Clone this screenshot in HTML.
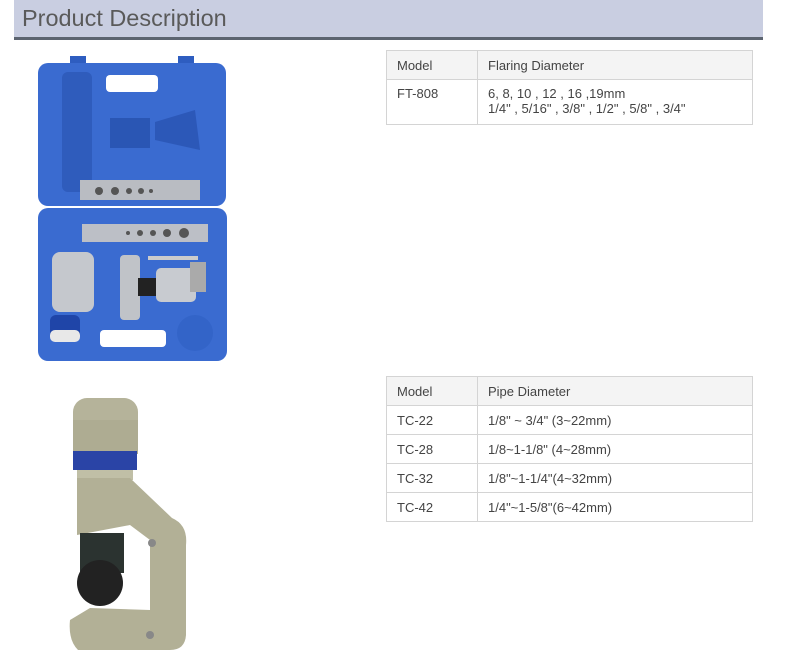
<!DOCTYPE html>
<html><head><meta charset="utf-8"><style>
body{margin:0;background:#fff;width:789px;height:671px;overflow:hidden;font-family:"Liberation Sans",sans-serif;position:relative}
.hd{position:absolute;left:14px;top:0;width:749px;height:37px;background:#c9cee1;border-bottom:3px solid #5c6470}
.hd span{position:absolute;left:8px;top:5px;font-size:23px;color:#5a5a5a;transform:scaleX(1.02);transform-origin:left;letter-spacing:0}
table{position:absolute;left:386px;border-collapse:collapse;width:367px;font-size:13px;color:#444}
td{border:1px solid #d4d4d4;padding:0 10px;vertical-align:top}
td:first-child{width:70px}
tr.h td{background:#f4f4f4}
</style></head><body>
<div class="hd"><span>Product Description</span></div>

<table style="top:50px">
<tr class="h" style="height:29px"><td style="vertical-align:middle">Model</td><td style="vertical-align:middle">Flaring Diameter</td></tr>
<tr style="height:45px"><td style="padding-top:6px">FT-808</td><td style="padding-top:6px;line-height:15px">6, 8, 10 , 12 , 16 ,19mm<br>1/4" , 5/16" , 3/8" , 1/2" , 5/8" , 3/4"</td></tr>
</table>

<table style="top:376px">
<tr class="h" style="height:29px"><td style="vertical-align:middle">Model</td><td style="vertical-align:middle">Pipe Diameter</td></tr>
<tr style="height:29px"><td style="vertical-align:middle">TC-22</td><td style="vertical-align:middle">1/8" ~ 3/4" (3~22mm)</td></tr>
<tr style="height:29px"><td style="vertical-align:middle">TC-28</td><td style="vertical-align:middle">1/8~1-1/8" (4~28mm)</td></tr>
<tr style="height:29px"><td style="vertical-align:middle">TC-32</td><td style="vertical-align:middle">1/8"~1-1/4"(4~32mm)</td></tr>
<tr style="height:29px"><td style="vertical-align:middle">TC-42</td><td style="vertical-align:middle">1/4"~1-5/8"(6~42mm)</td></tr>
</table>

<svg style="position:absolute;left:0;top:0" width="789" height="671">
<rect x="70" y="56" width="16" height="10" fill="#2e5dc0"/>
<rect x="178" y="56" width="16" height="10" fill="#2e5dc0"/>
<rect x="38" y="63" width="188" height="143" rx="10" fill="#3a6bd0"/>
<rect x="38" y="208" width="189" height="153" rx="10" fill="#3a6bd0"/>
<rect x="106" y="75" width="52" height="17" rx="4" fill="#fff"/>
<rect x="100" y="330" width="66" height="17" rx="4" fill="#fff"/>
<rect x="62" y="72" width="30" height="120" rx="6" fill="#2f5cbc"/>
<rect x="110" y="118" width="40" height="30" fill="#2a56b4"/>
<path d="M155 122 L195 110 L200 150 L155 140Z" fill="#2c58b8"/>
<rect x="80" y="180" width="120" height="20" fill="#b9bcc2"/>
<rect x="82" y="224" width="126" height="18" fill="#bcbfc6"/>
<g fill="#555"><circle cx="99" cy="191" r="4"/><circle cx="115" cy="191" r="4"/><circle cx="129" cy="191" r="3"/><circle cx="141" cy="191" r="3"/><circle cx="151" cy="191" r="2"/>
<circle cx="128" cy="233" r="2"/><circle cx="140" cy="233" r="3"/><circle cx="153" cy="233" r="3"/><circle cx="167" cy="233" r="4"/><circle cx="184" cy="233" r="5"/></g>
<rect x="52" y="252" width="42" height="60" rx="8" fill="#c5c8cd"/>
<rect x="50" y="315" width="30" height="25" rx="6" fill="#1f45a8"/>
<rect x="50" y="330" width="30" height="12" rx="5" fill="#e8e8e8"/>
<rect x="120" y="255" width="20" height="65" rx="4" fill="#c0c3c8"/>
<rect x="138" y="278" width="20" height="18" fill="#222"/>
<rect x="156" y="268" width="40" height="34" rx="5" fill="#c8cbd0"/>
<rect x="190" y="262" width="16" height="30" fill="#aaa"/>
<rect x="148" y="256" width="50" height="4" fill="#ccc"/>
<circle cx="195" cy="333" r="18" fill="#3364c8"/>
<rect x="73" y="398" width="65" height="56" rx="14" fill="#b5b39a"/>
<rect x="73" y="420" width="65" height="34" fill="#aeac92"/>
<rect x="73" y="451" width="64" height="19" fill="#2a44a6"/>
<rect x="77" y="470" width="56" height="10" fill="#c0bfa6"/>
<path d="M77 478 L130 478 L172 518 Q188 525 186 545 L186 635 Q185 650 170 650 L78 650 Q68 640 70 620 L90 608 L150 610 L150 540 L130 525 L77 535Z" fill="#b2b096"/>
<rect x="80" y="533" width="44" height="40" fill="#2b3330"/>
<circle cx="100" cy="583" r="23" fill="#222"/>
<circle cx="152" cy="543" r="4" fill="#888"/>
<circle cx="150" cy="635" r="4" fill="#888"/>
</svg>
</body></html>
